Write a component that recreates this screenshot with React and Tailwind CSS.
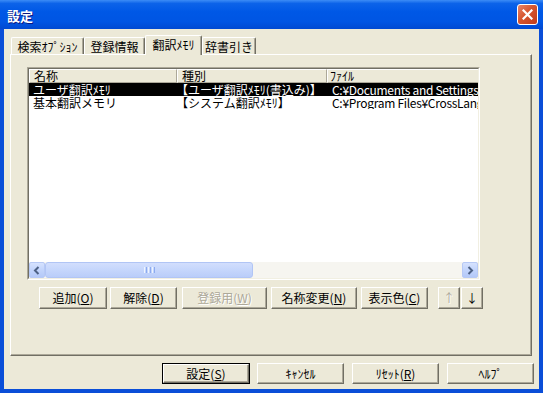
import React from 'react'

function Btn({ className = '', disabled, children }) {
  return (
    <div
      className={`flex items-center justify-center border border-t-white border-l-white border-r-[#716f64] border-b-[#716f64] shadow-[inset_-1px_-1px_0_#aca899] bg-[#ece9d8] leading-none ${
        disabled ? 'text-[#aca899] [text-shadow:1px_1px_0_#ffffff]' : 'text-black'
      } ${className}`}
    >
      {children}
    </div>
  )
}

function Key({ children }) {
  return <u className="underline-offset-[1px]">{children}</u>
}

function Tab({ className = '', selected, children }) {
  return (
    <div
      className={`flex items-center justify-center bg-[#ece9d8] border-t border-l border-r border-t-white border-l-white border-r-[#716f64] rounded-t-[2px] shadow-[inset_-1px_0_0_#aca899] leading-none ${
        selected ? 'relative z-10 h-[20px] -mb-[1px] pb-[2px]' : 'h-[17px] pt-[1px]'
      } ${className}`}
    >
      {children}
    </div>
  )
}

function Arrow({ dir }) {
  return (
    <div className="w-[16px] h-full rounded-[2px] border border-[#b7c9f5] bg-[linear-gradient(180deg,#d6e2fe_0%,#c2d4fc_50%,#b4c9f8_100%)] flex items-center justify-center">
      <svg width="8" height="9" viewBox="0 0 8 9">
        {dir === 'left' ? (
          <path d="M5.5 1 L2 4.5 L5.5 8" fill="none" stroke="#4d6185" strokeWidth="2" />
        ) : (
          <path d="M2.5 1 L6 4.5 L2.5 8" fill="none" stroke="#4d6185" strokeWidth="2" />
        )}
      </svg>
    </div>
  )
}

function ListView() {
  const rows = [
    { name: 'ユーザ翻訳ﾒﾓﾘ', kind: '【ユーザ翻訳ﾒﾓﾘ(書込み)】', file: 'C:¥Documents and Settings¥', sel: true },
    { name: '基本翻訳メモリ', kind: '【システム翻訳ﾒﾓﾘ】', file: 'C:¥Program Files¥CrossLanguage¥', sel: false },
  ]
  return (
    <div className="w-[453px] h-[213px] border border-t-[#aca899] border-l-[#aca899] border-r-white border-b-white">
      <div className="w-full h-full border border-t-[#716f64] border-l-[#716f64] border-r-[#f1efe2] border-b-[#f1efe2] bg-white flex flex-col">
        <div className="flex h-[14px] shrink-0 leading-[12px] whitespace-nowrap">
          <div className="w-[148px] pl-[4px] bg-[#ece9d8] border-t border-l border-r border-b border-t-white border-l-white border-r-[#aca899] border-b-[#aca899]">名称</div>
          <div className="w-[150px] pl-[4px] bg-[#ece9d8] border-t border-l border-r border-b border-t-white border-l-white border-r-[#aca899] border-b-[#aca899]">種別</div>
          <div className="flex-1 pl-[2px] bg-[#ece9d8] border-t border-l border-b border-t-white border-l-white border-b-[#aca899] overflow-hidden">ﾌｧｲﾙ</div>
        </div>
        <div className="flex-1 flex flex-col overflow-hidden">
          {rows.map((r) => (
            <div
              key={r.name}
              className={`flex h-[13px] leading-[13px] whitespace-nowrap ${r.sel ? 'bg-black text-white' : 'text-black'}`}
            >
              <div className="w-[148px] pl-[4px] overflow-hidden">{r.name}</div>
              <div className="w-[150px] -ml-[1px] overflow-hidden">{r.kind}</div>
              <div className="flex-1 pl-[6px] overflow-hidden tracking-[-0.3px]">{r.file}</div>
            </div>
          ))}
        </div>
        <div className="flex h-[16px] shrink-0 bg-[#f6f5f0]">
          <Arrow dir="left" />
          <div className="w-[208px] h-full rounded-[3px] border border-[#b1c5f5] bg-[linear-gradient(180deg,#d2defd_0%,#c5d6fc_50%,#bacdf9_100%)] flex items-center justify-center gap-[1px]">
            <div className="w-[1px] h-[6px] bg-[#eef4fe]" />
            <div className="w-[1px] h-[6px] bg-[#8cabf0]" />
            <div className="w-[1px] h-[6px] bg-[#eef4fe]" />
            <div className="w-[1px] h-[6px] bg-[#8cabf0]" />
            <div className="w-[1px] h-[6px] bg-[#eef4fe]" />
            <div className="w-[1px] h-[6px] bg-[#8cabf0]" />
          </div>
          <div className="flex-1" />
          <Arrow dir="right" />
        </div>
      </div>
    </div>
  )
}

export default function App() {
  return (
    <div className="w-[543px] h-[393px] flex flex-col bg-[#0a4ed8] font-['Noto_Sans_CJK_JP',sans-serif] text-[12px] select-none overflow-hidden">
      {/* title bar */}
      <div className="h-[29px] shrink-0 flex items-center justify-between bg-[linear-gradient(180deg,#3c8cf6_0%,#0c63e9_12%,#0058e6_40%,#0055e3_75%,#0049d2_100%)]">
        <div className="pl-[7px] pt-[2px] text-white font-bold text-[13px] leading-none [text-shadow:1px_1px_0_#0a1883]">設定</div>
        <div className="mr-[5px] w-[21px] h-[21px] rounded-[3px] border border-white bg-[linear-gradient(135deg,#e8856a_0%,#d6552f_45%,#c13b1a_100%)] flex items-center justify-center">
          <svg width="11" height="11" viewBox="0 0 11 11">
            <path d="M1.5 1.5 L9.5 9.5 M9.5 1.5 L1.5 9.5" stroke="white" strokeWidth="2.2" strokeLinecap="square" />
          </svg>
        </div>
      </div>

      {/* body */}
      <div className="flex-1 mx-[4px] mb-[4px] bg-[#ece9d8] flex flex-col">
        <div className="h-[19px] mt-[6px] pl-[7px] flex items-end">
          <Tab className="w-[73px]">検索ｵﾌﾟｼｮﾝ</Tab>
          <Tab className="w-[61px]">登録情報</Tab>
          <Tab className="w-[57px]" selected>翻訳ﾒﾓﾘ</Tab>
          <Tab className="w-[54px]">辞書引き</Tab>
        </div>

        <div className="ml-[6px] w-[522px] h-[302px] border border-t-white border-l-white border-r-[#716f64] border-b-[#716f64] shadow-[inset_-1px_-1px_0_#aca899] pt-[12px] pl-[16px]">
          <ListView />
          <div className="flex h-[22px] mt-[7px] ml-[12px]">
            <Btn className="w-[68px]">追加(<Key>O</Key>)</Btn>
            <Btn className="w-[67px] ml-[3px]">解除(<Key>D</Key>)</Btn>
            <Btn className="w-[85px] ml-[5px]" disabled>登録用(<Key>W</Key>)</Btn>
            <Btn className="w-[86px] ml-[4px]">名称変更(<Key>N</Key>)</Btn>
            <Btn className="w-[67px] ml-[4px]">表示色(<Key>C</Key>)</Btn>
            <Btn className="w-[22px] ml-[10px]" disabled>↑</Btn>
            <Btn className="w-[22px] ml-[1px]">↓</Btn>
          </div>
        </div>

        <div className="flex justify-end h-[21px] mt-[7px] pr-[5px]">
          <div className="w-[88px] h-full border border-black flex">
            <Btn className="flex-1">設定(<Key>S</Key>)</Btn>
          </div>
          <Btn className="w-[87px] ml-[7px]">ｷｬﾝｾﾙ</Btn>
          <Btn className="w-[87px] ml-[8px]">ﾘｾｯﾄ(<Key>R</Key>)</Btn>
          <Btn className="w-[87px] ml-[8px]">ﾍﾙﾌﾟ</Btn>
        </div>
      </div>
    </div>
  )
}
